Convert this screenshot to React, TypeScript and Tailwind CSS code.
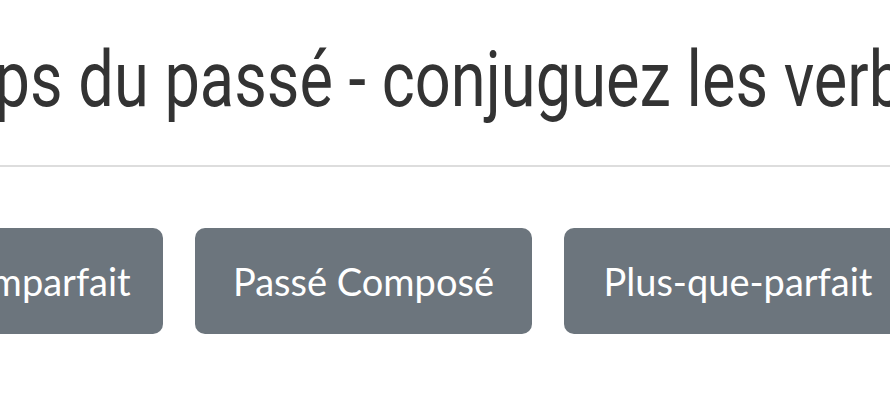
import React from 'react';

const tenses = [
  { label: 'Imparfait', width: 'w-[215px]' },
  { label: 'Passé Composé', width: 'w-[337px]' },
  { label: 'Plus-que-parfait', width: 'w-[348px]' },
];

export default function App() {
  return (
    <div className="w-[890px] h-[400px] overflow-hidden bg-white">
      {/* Title */}
      <div className="flex justify-center pt-[33px] pr-[48px] overflow-hidden">
        <h1 className="shrink-0 whitespace-nowrap scale-x-[0.81] font-['Roboto',sans-serif] text-[78px] leading-[94px] font-normal text-[#333333]">
          Temps du passé - conjuguez les verbes
        </h1>
      </div>

      <hr className="mt-[38px] border-0 border-t-2 border-[#dddddd]" />

      {/* Tense buttons */}
      <div className="flex justify-center gap-[32px] mt-[61px] pr-[30px] overflow-visible">
        {tenses.map((t) => (
          <button
            key={t.label}
            className={`${t.width} shrink-0 h-[106px] flex items-center justify-center rounded-[10px] bg-[#6c757d] text-white font-['Lato',sans-serif] text-[38px]`}
          >
            {t.label}
          </button>
        ))}
      </div>
    </div>
  );
}
